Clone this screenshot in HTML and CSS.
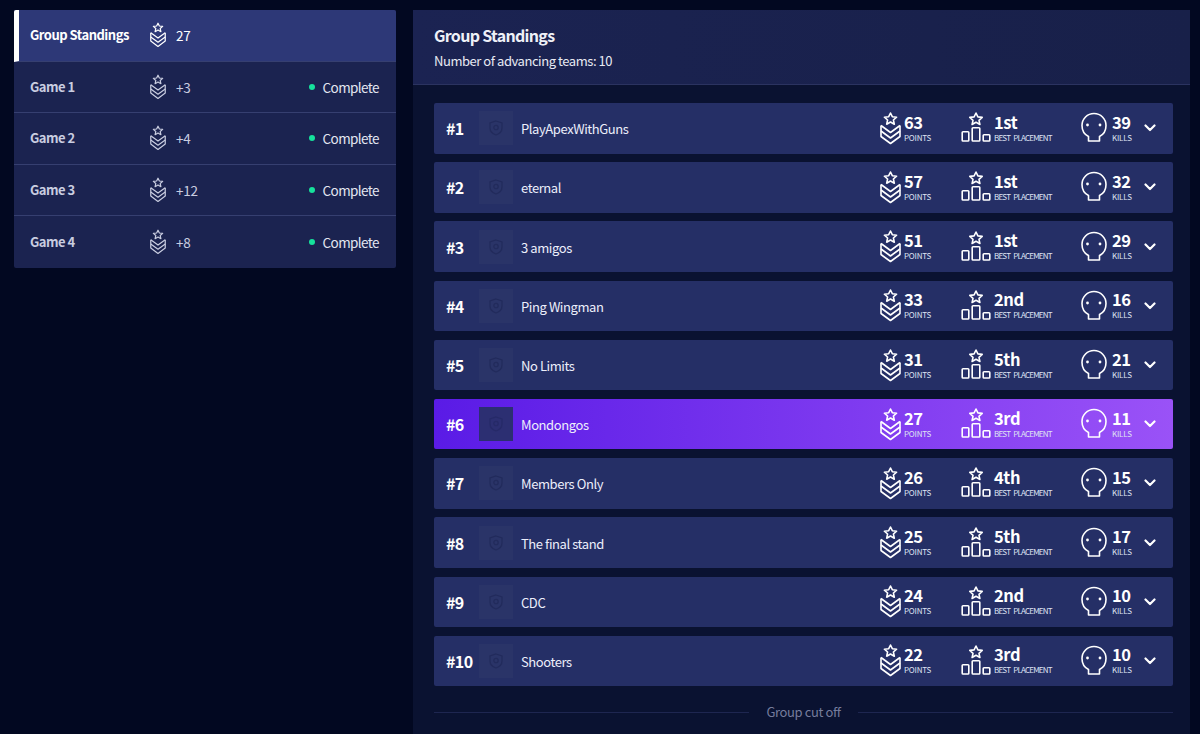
FILE: index.html
```html
<!DOCTYPE html>
<html lang="en">

<head>
    <meta charset="UTF-8">
    <title>Group Standings</title>
    <link rel="stylesheet" href="styles.css">
</head>

<body>
    <svg class="sprites" width="0" height="0">
        <symbol id="rank" viewBox="0 0 21 33">
            <g fill="none" stroke="currentColor" stroke-width="1.6" stroke-linejoin="round">
                <polygon points="10.5,1 12.3,4.7 16.6,5.2 13.4,8 14.3,12.2 10.5,10 6.7,12.2 7.6,8 4.4,5.2 8.7,4.7" />
                <path d="M1 13.5V24.5L10.5 31.5 20 24.5V13.5" />
                <path d="M1 13.5 10.5 20.5 20 13.5" />
                <path d="M1 19 10.5 26 20 19" />
            </g>
        </symbol>
        <symbol id="podium" viewBox="0 0 30 30">
            <g fill="none" stroke="currentColor" stroke-width="1.6" stroke-linejoin="round">
                <polygon points="15,1 16.9,4.9 21.2,5.4 18,8.3 18.9,12.5 15,10.3 11.1,12.5 12,8.3 8.8,5.4 13.1,4.9" />
                <rect x="1.2" y="19.7" width="6.6" height="9.3" rx="0.8" />
                <rect x="11.2" y="15.7" width="7.6" height="13.3" rx="0.8" />
                <rect x="22.2" y="22.7" width="6.6" height="6.3" rx="0.8" />
            </g>
        </symbol>
        <symbol id="skull" viewBox="0 0 26 30">
            <path d="M7.5 29V24.5C3.5 22.5 1 18.5 1 13.5A12 12 0 0 1 25 13.5C25 18.5 22.5 22.5 18.5 24.5V29Z" fill="none" stroke="currentColor" stroke-width="1.6" stroke-linejoin="round" />
            <circle cx="6.5" cy="13" r="1.4" fill="currentColor" />
            <circle cx="19" cy="13" r="1.4" fill="currentColor" />
        </symbol>
        <symbol id="chevron" viewBox="0 0 12 8">
            <path d="M1.5 1.5 6 6 10.5 1.5" fill="none" stroke="currentColor" stroke-width="2.2" stroke-linecap="round" stroke-linejoin="round" />
        </symbol>
        <symbol id="shield" viewBox="0 0 14 16">
            <path d="M7 1 13 3V8C13 11.5 10 14 7 15 4 14 1 11.5 1 8V3Z" fill="none" stroke="currentColor" stroke-width="1.3" />
            <circle cx="7" cy="7.5" r="2.2" fill="none" stroke="currentColor" stroke-width="1.3" />
        </symbol>
    </svg>

    <div class="page">
        <aside class="sidebar">
            <div class="game active">
                <span class="game-name">Group Standings</span>
                <svg class="game-icon"><use href="#rank" /></svg>
                <span class="game-score">27</span>
            </div>
            <div class="game">
                <span class="game-name">Game 1</span>
                <svg class="game-icon"><use href="#rank" /></svg>
                <span class="game-score">+3</span>
                <span class="status">Complete</span>
            </div>
            <div class="game">
                <span class="game-name">Game 2</span>
                <svg class="game-icon"><use href="#rank" /></svg>
                <span class="game-score">+4</span>
                <span class="status">Complete</span>
            </div>
            <div class="game">
                <span class="game-name">Game 3</span>
                <svg class="game-icon"><use href="#rank" /></svg>
                <span class="game-score">+12</span>
                <span class="status">Complete</span>
            </div>
            <div class="game">
                <span class="game-name">Game 4</span>
                <svg class="game-icon"><use href="#rank" /></svg>
                <span class="game-score">+8</span>
                <span class="status">Complete</span>
            </div>
        </aside>

        <main class="standings">
            <header class="standings-head">
                <h1>Group Standings</h1>
                <p>Number of advancing teams: 10</p>
            </header>

            <div class="teams">
                <div class="team">
                    <span class="rank">#1</span>
                    <span class="avatar"><svg><use href="#shield" /></svg></span>
                    <span class="team-name">PlayApexWithGuns</span>
                    <div class="stat stat-points"><svg class="icon-rank"><use href="#rank" /></svg><div><b>63</b><small>POINTS</small></div></div>
                    <div class="stat stat-place"><svg class="icon-podium"><use href="#podium" /></svg><div><b>1st</b><small>BEST PLACEMENT</small></div></div>
                    <div class="stat stat-kills"><svg class="icon-skull"><use href="#skull" /></svg><div><b>39</b><small>KILLS</small></div></div>
                    <svg class="chevron"><use href="#chevron" /></svg>
                </div>
                <div class="team">
                    <span class="rank">#2</span>
                    <span class="avatar"><svg><use href="#shield" /></svg></span>
                    <span class="team-name">eternal</span>
                    <div class="stat stat-points"><svg class="icon-rank"><use href="#rank" /></svg><div><b>57</b><small>POINTS</small></div></div>
                    <div class="stat stat-place"><svg class="icon-podium"><use href="#podium" /></svg><div><b>1st</b><small>BEST PLACEMENT</small></div></div>
                    <div class="stat stat-kills"><svg class="icon-skull"><use href="#skull" /></svg><div><b>32</b><small>KILLS</small></div></div>
                    <svg class="chevron"><use href="#chevron" /></svg>
                </div>
                <div class="team">
                    <span class="rank">#3</span>
                    <span class="avatar"><svg><use href="#shield" /></svg></span>
                    <span class="team-name">3 amigos</span>
                    <div class="stat stat-points"><svg class="icon-rank"><use href="#rank" /></svg><div><b>51</b><small>POINTS</small></div></div>
                    <div class="stat stat-place"><svg class="icon-podium"><use href="#podium" /></svg><div><b>1st</b><small>BEST PLACEMENT</small></div></div>
                    <div class="stat stat-kills"><svg class="icon-skull"><use href="#skull" /></svg><div><b>29</b><small>KILLS</small></div></div>
                    <svg class="chevron"><use href="#chevron" /></svg>
                </div>
                <div class="team">
                    <span class="rank">#4</span>
                    <span class="avatar"><svg><use href="#shield" /></svg></span>
                    <span class="team-name">Ping Wingman</span>
                    <div class="stat stat-points"><svg class="icon-rank"><use href="#rank" /></svg><div><b>33</b><small>POINTS</small></div></div>
                    <div class="stat stat-place"><svg class="icon-podium"><use href="#podium" /></svg><div><b>2nd</b><small>BEST PLACEMENT</small></div></div>
                    <div class="stat stat-kills"><svg class="icon-skull"><use href="#skull" /></svg><div><b>16</b><small>KILLS</small></div></div>
                    <svg class="chevron"><use href="#chevron" /></svg>
                </div>
                <div class="team">
                    <span class="rank">#5</span>
                    <span class="avatar"><svg><use href="#shield" /></svg></span>
                    <span class="team-name">No Limits</span>
                    <div class="stat stat-points"><svg class="icon-rank"><use href="#rank" /></svg><div><b>31</b><small>POINTS</small></div></div>
                    <div class="stat stat-place"><svg class="icon-podium"><use href="#podium" /></svg><div><b>5th</b><small>BEST PLACEMENT</small></div></div>
                    <div class="stat stat-kills"><svg class="icon-skull"><use href="#skull" /></svg><div><b>21</b><small>KILLS</small></div></div>
                    <svg class="chevron"><use href="#chevron" /></svg>
                </div>
                <div class="team mine">
                    <span class="rank">#6</span>
                    <span class="avatar"><svg><use href="#shield" /></svg></span>
                    <span class="team-name">Mondongos</span>
                    <div class="stat stat-points"><svg class="icon-rank"><use href="#rank" /></svg><div><b>27</b><small>POINTS</small></div></div>
                    <div class="stat stat-place"><svg class="icon-podium"><use href="#podium" /></svg><div><b>3rd</b><small>BEST PLACEMENT</small></div></div>
                    <div class="stat stat-kills"><svg class="icon-skull"><use href="#skull" /></svg><div><b>11</b><small>KILLS</small></div></div>
                    <svg class="chevron"><use href="#chevron" /></svg>
                </div>
                <div class="team">
                    <span class="rank">#7</span>
                    <span class="avatar"><svg><use href="#shield" /></svg></span>
                    <span class="team-name">Members Only</span>
                    <div class="stat stat-points"><svg class="icon-rank"><use href="#rank" /></svg><div><b>26</b><small>POINTS</small></div></div>
                    <div class="stat stat-place"><svg class="icon-podium"><use href="#podium" /></svg><div><b>4th</b><small>BEST PLACEMENT</small></div></div>
                    <div class="stat stat-kills"><svg class="icon-skull"><use href="#skull" /></svg><div><b>15</b><small>KILLS</small></div></div>
                    <svg class="chevron"><use href="#chevron" /></svg>
                </div>
                <div class="team">
                    <span class="rank">#8</span>
                    <span class="avatar"><svg><use href="#shield" /></svg></span>
                    <span class="team-name">The final stand</span>
                    <div class="stat stat-points"><svg class="icon-rank"><use href="#rank" /></svg><div><b>25</b><small>POINTS</small></div></div>
                    <div class="stat stat-place"><svg class="icon-podium"><use href="#podium" /></svg><div><b>5th</b><small>BEST PLACEMENT</small></div></div>
                    <div class="stat stat-kills"><svg class="icon-skull"><use href="#skull" /></svg><div><b>17</b><small>KILLS</small></div></div>
                    <svg class="chevron"><use href="#chevron" /></svg>
                </div>
                <div class="team">
                    <span class="rank">#9</span>
                    <span class="avatar"><svg><use href="#shield" /></svg></span>
                    <span class="team-name">CDC</span>
                    <div class="stat stat-points"><svg class="icon-rank"><use href="#rank" /></svg><div><b>24</b><small>POINTS</small></div></div>
                    <div class="stat stat-place"><svg class="icon-podium"><use href="#podium" /></svg><div><b>2nd</b><small>BEST PLACEMENT</small></div></div>
                    <div class="stat stat-kills"><svg class="icon-skull"><use href="#skull" /></svg><div><b>10</b><small>KILLS</small></div></div>
                    <svg class="chevron"><use href="#chevron" /></svg>
                </div>
                <div class="team">
                    <span class="rank">#10</span>
                    <span class="avatar"><svg><use href="#shield" /></svg></span>
                    <span class="team-name">Shooters</span>
                    <div class="stat stat-points"><svg class="icon-rank"><use href="#rank" /></svg><div><b>22</b><small>POINTS</small></div></div>
                    <div class="stat stat-place"><svg class="icon-podium"><use href="#podium" /></svg><div><b>3rd</b><small>BEST PLACEMENT</small></div></div>
                    <div class="stat stat-kills"><svg class="icon-skull"><use href="#skull" /></svg><div><b>10</b><small>KILLS</small></div></div>
                    <svg class="chevron"><use href="#chevron" /></svg>
                </div>
            </div>

            <div class="cut-off"><span>Group cut off</span></div>
        </main>
    </div>
</body>

</html>
```

FILE: styles.css
```css
html, body {
    height: 100%;
}

body {
    margin: 0;
    overflow: hidden;
    background-color: #020821;
    color: #fff;
    font-family: "Noto Sans CJK JP", "Noto Sans", sans-serif;
}

.sprites {
    display: block;
}

.page {
    display: flex;
    align-items: flex-start;
    gap: 17px;
    padding: 10px 10px 0 14px;
    height: 100%;
    box-sizing: border-box;
}

/* left column */
.sidebar {
    flex: 0 0 382px;
    background-color: #1b2350;
    border-radius: 2px;
    overflow: hidden;
}

.game {
    display: flex;
    align-items: center;
    height: 51.5px;
    box-sizing: border-box;
    padding: 0 17px 0 16px;
    border-bottom: 1px solid #363f70;
    color: #c9cde0;
    font-size: 13px;
}

.game:last-child {
    border-bottom: none;
}

.game.active {
    background-color: #2d3877;
    border-left: 5px solid #fff;
    padding-left: 11px;
    color: #fff;
}

.game-name {
    flex: 0 0 120px;
    font-weight: 700;
    font-size: 13px;
    letter-spacing: -0.5px;
    line-height: 18px;
}

.game-icon {
    width: 16px;
    height: 26px;
    margin-right: 10px;
}

.game-score {
    font-size: 13.5px;
    letter-spacing: -0.3px;
    line-height: 18px;
}

.status {
    margin-left: auto;
    display: flex;
    align-items: center;
    gap: 8px;
    color: #e4e6f0;
    font-size: 13.5px;
    letter-spacing: -0.6px;
    line-height: 18px;
}

.status::before {
    content: "";
    width: 6px;
    height: 6px;
    border-radius: 50%;
    background-color: #16e19c;
}

/* right column */
.standings {
    flex: 1;
    height: 100%;
    background-color: #0a1231;
}

.standings-head {
    height: 75px;
    box-sizing: border-box;
    padding: 13px 21px 0;
    background: linear-gradient(90deg, #1b2352, #182049);
    border-bottom: 1px solid #2b3360;
}

.standings-head h1 {
    margin: 0;
    font-size: 16px;
    font-weight: 700;
    letter-spacing: -0.7px;
    line-height: 24px;
    color: #eef0f7;
}

.standings-head p {
    margin: 4px 0 0;
    font-size: 13px;
    letter-spacing: -0.45px;
    line-height: 20px;
    color: #e8eaf3;
}

.teams {
    display: flex;
    flex-direction: column;
    gap: 8.7px;
    padding: 18px 17px 0 21px;
}

.team {
    display: flex;
    align-items: center;
    height: 50.5px;
    padding: 0 12px;
    background-color: #252f66;
    border-radius: 2px;
}

.team.mine {
    background: linear-gradient(90deg, #5a1be6, #9a52f7);
}

.rank {
    flex: 0 0 33px;
    font-size: 16px;
    font-weight: 700;
    letter-spacing: -0.6px;
    line-height: 20px;
}

.avatar {
    flex: 0 0 34px;
    height: 34px;
    display: flex;
    align-items: center;
    justify-content: center;
    margin-right: 8px;
    background-color: #2a3468;
    color: #222b5c;
}

.avatar svg {
    width: 14px;
    height: 16px;
}

.mine .avatar {
    background-color: #2c2f72;
    color: #262a68;
}

.team-name {
    flex: 1;
    padding-top: 2px;
    font-size: 13px;
    letter-spacing: -0.42px;
    line-height: 20px;
    color: #eceefb;
}

.stat {
    display: flex;
    align-items: center;
}

.stat-points {
    flex: 0 0 81px;
}

.stat-place {
    flex: 0 0 120px;
}

.stat-kills {
    flex: 0 0 64px;
}

.icon-rank {
    width: 21px;
    height: 33px;
    margin-right: 3px;
}

.icon-podium {
    width: 30px;
    height: 30px;
    margin-right: 3px;
    margin-bottom: 2px;
}

.icon-skull {
    width: 26px;
    height: 30px;
    margin-right: 5px;
    margin-bottom: 2px;
}

.stat b {
    display: block;
    font-size: 16.5px;
    font-weight: 700;
    letter-spacing: -0.4px;
    line-height: 18px;
}

.stat small {
    display: block;
    margin-top: 1px;
    font-size: 8px;
    letter-spacing: -0.2px;
    line-height: 12px;
    color: #dfe2f2;
}

.stat-place small {
    letter-spacing: -0.8px;
    word-spacing: 2px;
}

.chevron {
    width: 12px;
    height: 8px;
    margin-left: -1px;
    margin-right: 5px;
}

.cut-off {
    display: flex;
    align-items: center;
    gap: 17px;
    padding: 17px 17px 0 21px;
    color: #767c9c;
    font-size: 13px;
    letter-spacing: -0.4px;
    line-height: 18px;
}

.cut-off::before,
.cut-off::after {
    content: "";
    flex: 1;
    height: 1px;
    background-color: #1e2650;
}
```
